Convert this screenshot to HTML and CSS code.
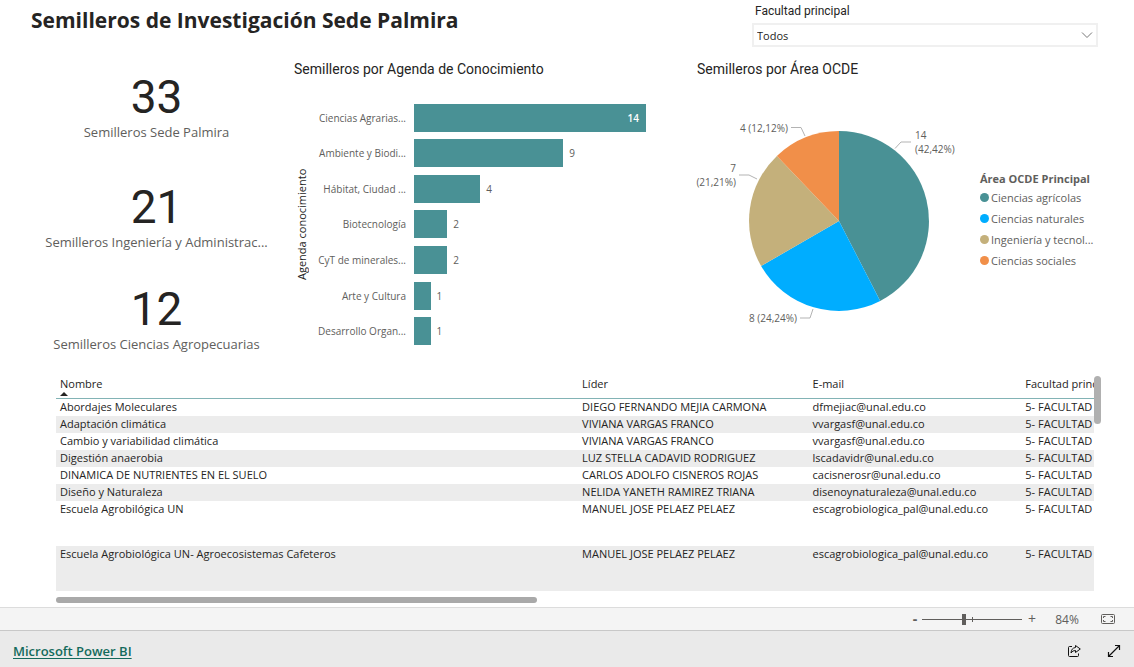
FILE: index.html
```html
<!DOCTYPE html>
<html lang="es">
<head>
<meta charset="utf-8">
<meta name="viewport" content="width=device-width, initial-scale=1">
<title>Semilleros de Investigación Sede Palmira</title>
<link rel="stylesheet" href="styles.css">
</head>
<body>
<main class="report">
  <header class="report-header">
    <h1 class="report-title">Semilleros de Investigación Sede Palmira</h1>
    <div class="slicer">
      <label class="slicer-label" for="facultad">Facultad principal</label>
      <div class="slicer-box">
        <select class="slicer-select" id="facultad"><option>Todos</option></select>
        <svg class="slicer-chevron" width="12" height="8" viewBox="0 0 12 8" aria-hidden="true"><path d="M1 1.5 6 6.5 11 1.5" fill="none" stroke="#777" stroke-width="1"/></svg>
      </div>
    </div>
  </header>

  <div class="visuals">
    <section class="kpis">
      <div class="kpi kpi-total"><div class="kpi-value">33</div><div class="kpi-label">Semilleros Sede Palmira</div></div>
      <div class="kpi"><div class="kpi-value">21</div><div class="kpi-label">Semilleros Ingeniería y Administrac...</div></div>
      <div class="kpi"><div class="kpi-value">12</div><div class="kpi-label">Semilleros Ciencias Agropecuarias</div></div>
    </section>

    <section class="chart">
      <h2 class="chart-title">Semilleros por Agenda de Conocimiento</h2>
      <div class="bar-chart">
        <div class="axis-title">Agenda conocimiento</div>
        <div class="bars">
          <div class="bar-row"><span class="bar-name">Ciencias Agrarias...</span><div class="bar-track"><div class="bar bar-full" style="width:100%">14</div></div></div>
          <div class="bar-row"><span class="bar-name">Ambiente y Biodi...</span><div class="bar-track"><div class="bar" style="width:64.29%"></div><span class="bar-value">9</span></div></div>
          <div class="bar-row"><span class="bar-name">Hábitat, Ciudad ...</span><div class="bar-track"><div class="bar" style="width:28.57%"></div><span class="bar-value">4</span></div></div>
          <div class="bar-row"><span class="bar-name">Biotecnología</span><div class="bar-track"><div class="bar" style="width:14.29%"></div><span class="bar-value">2</span></div></div>
          <div class="bar-row"><span class="bar-name">CyT de minerales...</span><div class="bar-track"><div class="bar" style="width:14.29%"></div><span class="bar-value">2</span></div></div>
          <div class="bar-row"><span class="bar-name">Arte y Cultura</span><div class="bar-track"><div class="bar" style="width:7.14%"></div><span class="bar-value">1</span></div></div>
          <div class="bar-row"><span class="bar-name">Desarrollo Organ...</span><div class="bar-track"><div class="bar" style="width:7.14%"></div><span class="bar-value">1</span></div></div>
        </div>
      </div>
    </section>

    <section class="chart">
      <h2 class="chart-title">Semilleros por Área OCDE</h2>
      <div class="pie-chart">
        <svg class="pie" width="280" height="220" viewBox="0 0 280 220" role="img" aria-label="Semilleros por Área OCDE">
          <path fill="#499195" d="M149 111V21A90 90 0 0 1 190.2 191Z"/>
          <path fill="#00adff" d="M149 111 190.2 191A90 90 0 0 1 71.1 156Z"/>
          <path fill="#c4b07b" d="M149 111 71.1 156A90 90 0 0 1 86.9 45.9Z"/>
          <path fill="#f18f49" d="M149 111 86.9 45.9A90 90 0 0 1 149 21Z"/>
          <g class="leader">
            <path d="M205 38.500 211 32H221"/>
            <path d="M101 17.500H111L115 26"/>
            <path d="M49 65H59L67 69"/>
            <path d="M110 208H120L123 199"/>
          </g>
          <text x="225" y="29">14</text>
          <text x="225" y="43">(42,42%)</text>
          <text x="98" y="22" text-anchor="end">4 (12,12%)</text>
          <text x="46" y="62" text-anchor="end">7</text>
          <text x="46" y="76" text-anchor="end">(21,21%)</text>
          <text x="107" y="212" text-anchor="end">8 (24,24%)</text>
        </svg>
        <div class="legend">
          <h3 class="legend-title">Área OCDE Principal</h3>
          <ul class="legend-list">
            <li class="legend-item"><span class="dot dot-agri"></span>Ciencias agrícolas</li>
            <li class="legend-item"><span class="dot dot-nat"></span>Ciencias naturales</li>
            <li class="legend-item"><span class="dot dot-ing"></span>Ingeniería y tecnol...</li>
            <li class="legend-item"><span class="dot dot-soc"></span>Ciencias sociales</li>
          </ul>
        </div>
      </div>
    </section>
  </div>

  <section class="table-visual">
    <div class="table-area">
      <div class="table-clip">
        <table class="grid">
          <colgroup><col class="col-name"><col class="col-leader"><col class="col-mail"><col></colgroup>
          <thead><tr><th>Nombre<span class="sort"></span></th><th>Líder</th><th>E-mail</th><th>Facultad princ</th></tr></thead>
          <tbody>
            <tr><td>Abordajes Moleculares</td><td>DIEGO FERNANDO MEJIA CARMONA</td><td>dfmejiac@unal.edu.co</td><td>5- FACULTAD</td></tr>
            <tr><td>Adaptación climática</td><td>VIVIANA VARGAS FRANCO</td><td>vvargasf@unal.edu.co</td><td>5- FACULTAD</td></tr>
            <tr><td>Cambio y variabilidad climática</td><td>VIVIANA VARGAS FRANCO</td><td>vvargasf@unal.edu.co</td><td>5- FACULTAD</td></tr>
            <tr><td>Digestión anaerobia</td><td>LUZ STELLA CADAVID RODRIGUEZ</td><td>lscadavidr@unal.edu.co</td><td>5- FACULTAD</td></tr>
            <tr><td>DINAMICA DE NUTRIENTES EN EL SUELO</td><td>CARLOS ADOLFO CISNEROS ROJAS</td><td>cacisnerosr@unal.edu.co</td><td>5- FACULTAD</td></tr>
            <tr><td>Diseño y Naturaleza</td><td>NELIDA YANETH RAMIREZ TRIANA</td><td>disenoynaturaleza@unal.edu.co</td><td>5- FACULTAD</td></tr>
            <tr class="tall"><td>Escuela Agrobilógica UN</td><td>MANUEL JOSE PELAEZ PELAEZ</td><td>escagrobiologica_pal@unal.edu.co</td><td>5- FACULTAD</td></tr>
            <tr class="tall"><td>Escuela Agrobiológica UN- Agroecosistemas Cafeteros</td><td>MANUEL JOSE PELAEZ PELAEZ</td><td>escagrobiologica_pal@unal.edu.co</td><td>5- FACULTAD</td></tr>
          </tbody>
        </table>
      </div>
      <div class="scroll-y"></div>
    </div>
    <div class="scroll-x"></div>
  </section>
</main>

<div class="zoom-bar">
  <button class="zoom-btn zoom-out" type="button" aria-label="Alejar">-</button>
  <input class="zoom-range" type="range" min="0" max="200" value="84" aria-label="Zoom">
  <button class="zoom-btn" type="button" aria-label="Acercar">+</button>
  <span class="zoom-value">84%</span>
  <button class="icon-btn" type="button" aria-label="Ajustar a la página">
    <svg width="14" height="10" viewBox="0 0 14 10" fill="none" stroke="#605e5c"><rect x=".5" y=".5" width="13" height="9" rx="1"/><path d="M4.500 2.500H2.500V4M2.500 6V7.500H4.500M9.500 2.500H11.500V4M11.500 6V7.500H9.500"/></svg>
  </button>
</div>

<footer class="brand-bar">
  <a class="brand-link" href="#">Microsoft Power BI</a>
  <div class="brand-actions">
    <button class="icon-btn" type="button" aria-label="Compartir">
      <svg width="14" height="14" viewBox="0 0 14 14" fill="none" stroke="#111" stroke-linejoin="round"><path d="M5 2.500H2.500Q1.500 2.500 1.500 3.500V11.500Q1.500 12.500 2.500 12.500H10.500Q11.500 12.500 11.500 11.500V9.500"/><path d="M8.500 1.500 13.300 5 8.500 8.500V6.500Q5.500 6.300 4 9Q4.300 4 8.500 3.500Z"/></svg>
    </button>
    <button class="icon-btn" type="button" aria-label="Pantalla completa">
      <svg width="14" height="14" viewBox="0 0 14 14" fill="none" stroke="#111" stroke-width="1.200"><path d="M1.500 12.500 12.500 1.500M8 1.500H12.500V6M1.500 8V12.500H6"/></svg>
    </button>
  </div>
</footer>
</body>
</html>
```

FILE: styles.css
```css
* { box-sizing: border-box; }

body {
  margin: 0;
  min-height: 100vh;
  display: flex;
  flex-direction: column;
  background: #fff;
  color: #252423;
  font-family: "Open Sans", "Noto Sans", sans-serif;
  font-size: 11px;
}

h1, h2, h3, ul { margin: 0; padding: 0; }
button { border: 0; padding: 0; background: none; font: inherit; color: inherit; }

.report { flex: 1; padding: 0 33px 4px 0; }

.report-header {
  display: flex;
  justify-content: space-between;
  padding: 3px 3px 0 31px;
}
.report-title { font-size: 21px; line-height: 34px; font-weight: 700; }
.slicer { width: 346px; }
.slicer-label {
  display: block;
  padding-left: 3px;
  font: 12px/16px Roboto, sans-serif;
}
.slicer-box { display: grid; align-items: center; margin-top: 4px; }
.slicer-select, .slicer-chevron { grid-area: 1 / 1; }
.slicer-select {
  appearance: none;
  width: 100%;
  height: 24px;
  padding: 1px 3px 0;
  border: 2px solid #f0f0f0;
  border-radius: 0;
  background: #fff;
  color: #252423;
  font: 11px/16px "Open Sans", sans-serif;
}
.slicer-chevron { justify-self: end; margin-right: 5px; pointer-events: none; }

.visuals {
  display: grid;
  grid-template-columns: 284fr 403fr 414fr;
  padding-top: 9px;
}

.kpis { padding: 18px 0 0 29px; display: flex; flex-direction: column; gap: 34px; text-align: center; }
.kpi-total { padding-bottom: 8px; }
.kpi-value { font: 46px/46px Roboto, sans-serif; }
.kpi-label { margin-top: 2px; font-size: 13px; line-height: 20px; color: #605e5c; }

.chart { padding: 3px 0 0 10px; }
.chart-title { font: 14px/20px Roboto, sans-serif; }

.bar-chart { display: flex; padding: 21px 41px 0 0; color: #605e5c; }
.axis-title {
  width: 16px;
  writing-mode: vertical-rl;
  transform: rotate(180deg);
  text-align: center;
  font-size: 11px;
  line-height: 16px;
  color: #252423;
}
.bars { flex: 1; height: 249px; display: grid; grid-auto-rows: 1fr; font-size: 10px; }
.bar-row { display: flex; align-items: center; }
.bar-name { width: 96px; text-align: right; white-space: nowrap; }
.bar-track { flex: 1; display: flex; align-items: center; margin-left: 8px; }
.bar { flex: none; height: 28px; background: #499195; }
.bar-full { padding-right: 7px; text-align: right; line-height: 28px; color: #fff; font-weight: 600; }
.bar-value { margin-left: 6px; }

.pie-chart { display: flex; align-items: flex-start; padding-top: 31px; margin-left: -7px; }
.pie { flex: none; font-size: 10px; }
.pie text { fill: #605e5c; }
.leader { fill: none; stroke: #b3b3b3; }
.legend { flex: 1; padding: 60px 0 0 10px; color: #605e5c; white-space: nowrap; }
.legend-title { font-size: 11px; line-height: 17px; font-weight: 700; }
.legend-list { list-style: none; }
.legend-item { display: flex; align-items: center; gap: 2px; line-height: 21px; }
.dot { width: 9px; height: 9px; border-radius: 50%; }
.dot-agri { background: #499195; }
.dot-nat { background: #00adff; }
.dot-ing { background: #c4b07b; }
.dot-soc { background: #f18f49; }

.table-visual { padding: 22px 0 0 56px; }
.table-area { display: flex; }
.table-clip { flex: 1; min-width: 0; height: 221px; overflow: hidden; }
.grid { width: 100%; table-layout: fixed; border-collapse: separate; border-spacing: 0; }
.col-name { width: 50.3%; }
.col-leader { width: 22.2%; }
.col-mail { width: 20.5%; }
.grid th, .grid td {
  padding: 0 0 0 4px;
  height: 17px;
  line-height: 16px;
  text-align: left;
  vertical-align: top;
  white-space: nowrap;
}
.grid th { height: 23px; font-weight: 400; border-bottom: 1px solid #82b3b5; }
.grid tr:nth-child(even) td { background: #ececec; }
.grid .tall td { height: 45px; }
.sort {
  display: block;
  width: 0;
  border: 4px solid transparent;
  border-top: 0;
  border-bottom-color: #252423;
}
.scroll-y { width: 7px; height: 48px; border-radius: 4px; background: #b0b0b0; }
.scroll-x { width: 46%; height: 6px; border-radius: 3px; background: #a9a9a9; }

.zoom-bar {
  display: flex;
  align-items: center;
  justify-content: flex-end;
  height: 23px;
  padding-right: 19px;
  border-top: 1px solid #dcdcdc;
  background: #f4f4f4;
  color: #605e5c;
}
.zoom-btn { width: 20px; font-size: 14px; line-height: 20px; }
.zoom-out { width: 14px; font-weight: 700; }
.zoom-range {
  appearance: none;
  width: 100px;
  height: 12px;
  margin: 0;
  background:
    linear-gradient(#605e5c, #605e5c) 50px 50% / 1px 5px no-repeat,
    linear-gradient(#605e5c, #605e5c) 0 50% / 100% 1px no-repeat;
}
.zoom-range::-webkit-slider-thumb { appearance: none; width: 4px; height: 11px; background: #605e5c; }
.zoom-value { width: 50px; text-align: center; font-size: 12px; margin-right: 9px; }
.icon-btn { display: flex; }

.brand-bar {
  display: flex;
  align-items: center;
  justify-content: space-between;
  height: 37px;
  padding: 4px 13px 0;
  border-top: 1px solid #c8c8c8;
  background: #eaeaea;
}
.brand-link { color: #146a5c; font-size: 13px; line-height: 20px; font-weight: 600; text-underline-offset: 2px; }
.brand-actions { display: flex; gap: 26px; }
```
